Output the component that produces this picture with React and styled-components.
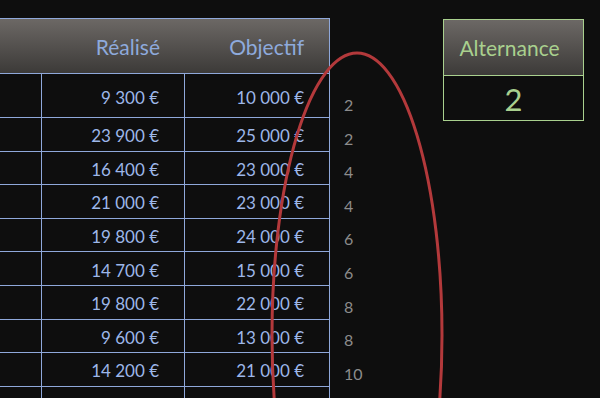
import React from "react";
import styled, { createGlobalStyle } from "styled-components";

const GlobalStyle = createGlobalStyle`
  html, body {
    margin: 0;
    padding: 0;
    background: #0e0e0e;
    overflow: hidden;
  }
`;

const rows = [
  { done: "9 300 €", goal: "10 000 €", step: 2 },
  { done: "23 900 €", goal: "25 000 €", step: 2 },
  { done: "16 400 €", goal: "23 000 €", step: 4 },
  { done: "21 000 €", goal: "23 000 €", step: 4 },
  { done: "19 800 €", goal: "24 000 €", step: 6 },
  { done: "14 700 €", goal: "15 000 €", step: 6 },
  { done: "19 800 €", goal: "22 000 €", step: 8 },
  { done: "9 600 €", goal: "13 000 €", step: 8 },
  { done: "14 200 €", goal: "21 000 €", step: 10 },
  { done: "", goal: "", step: "" },
];

const Page = styled.div`
  position: relative;
  width: 600px;
  height: 398px;
  overflow: hidden;
  display: flex;
  align-items: flex-start;
  padding-top: 18px;
  box-sizing: border-box;
  font-family: Lato, "Open Sans", sans-serif;
`;

const Sheet = styled.div`
  display: grid;
  grid-template-columns: 60px 143px 145px 113px;
  grid-template-rows: 56px 44px repeat(9, 33.6px);
  margin-left: -18px;
`;

const HeadCell = styled.div`
  box-sizing: border-box;
  background: linear-gradient(#6c6865, #3c3a38);
  border-top: 1px solid #8fa8da;
  border-bottom: 1px solid #8fa8da;
  border-right: ${({ $last }) => ($last ? "1px solid #8fa8da" : "none")};
  display: flex;
  align-items: center;
  justify-content: flex-end;
  padding: 1px 25px 0 0;
  color: #8eaadc;
  font-size: 21px;
`;

const Cell = styled.div`
  box-sizing: border-box;
  border-right: 1px solid #8fa8da;
  border-bottom: 1px solid #8fa8da;
  display: flex;
  align-items: center;
  justify-content: flex-end;
  padding: 3px 25px 0 0;
  color: #9db7e9;
  font-size: 17px;
`;

const Step = styled.div`
  display: flex;
  align-items: flex-end;
  padding: 0 0 4px 14px;
  color: #8c8c8c;
  font-size: 16px;
`;

const Blank = styled.div``;

const Card = styled.div`
  margin-top: 1px;
  width: 141px;
  display: grid;
  grid-template-rows: 56px 44px;
  border: 1px solid #a9d08e;
  box-sizing: border-box;
  color: #a9d08e;
`;

const CardHead = styled.div`
  display: flex;
  align-items: center;
  justify-content: center;
  padding-right: 8px;
  background: linear-gradient(#6c6865, #3c3a38);
  border-bottom: 1px solid #a9d08e;
  font-size: 21px;
`;

const CardValue = styled.div`
  display: flex;
  align-items: center;
  justify-content: center;
  font-size: 31px;
  padding-top: 2px;
`;

const Overlay = styled.svg`
  position: absolute;
  left: 0;
  top: 0;
  pointer-events: none;
`;

export default function App() {
  return (
    <>
      <GlobalStyle />
      <Page>
        <Sheet>
          <HeadCell />
          <HeadCell>Réalisé</HeadCell>
          <HeadCell $last>Objectif</HeadCell>
          <Blank />
          {rows.map((row, i) => (
            <React.Fragment key={i}>
              <Cell />
              <Cell>{row.done}</Cell>
              <Cell>{row.goal}</Cell>
              <Step>{row.step}</Step>
            </React.Fragment>
          ))}
        </Sheet>
        <Card>
          <CardHead>Alternance</CardHead>
          <CardValue>2</CardValue>
        </Card>
        <Overlay width="600" height="398" viewBox="0 0 600 398">
          <ellipse
            cx="357"
            cy="335"
            rx="85"
            ry="282"
            fill="none"
            stroke="#b3393b"
            strokeWidth="3"
          />
        </Overlay>
      </Page>
    </>
  );
}
